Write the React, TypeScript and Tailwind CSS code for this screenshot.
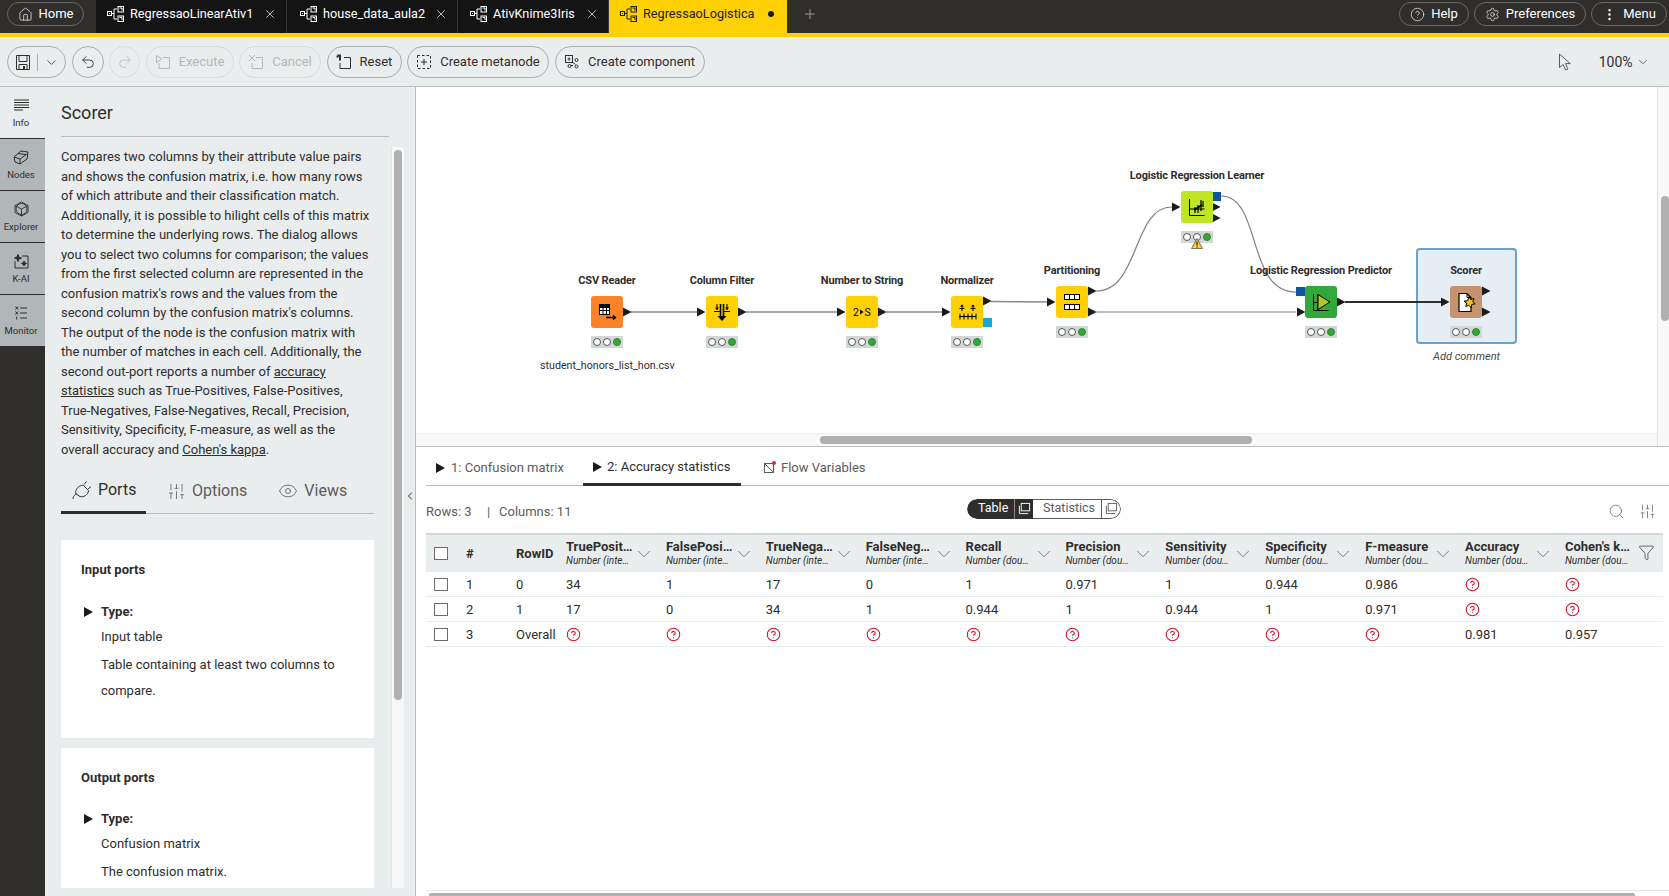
import React from "react";
import {
  House, CircleHelp, Settings, EllipsisVertical, ChevronDown, Undo2, Redo2, Search,
  SlidersVertical, Funnel, Eye, X, Plus, ChevronLeft,
} from "lucide-react";

const DESC = (
  <>
    Compares two columns by their attribute value pairs and shows the confusion matrix, i.e. how many rows of which attribute and their classification match. Additionally, it is possible to hilight cells of this matrix to determine the underlying rows. The dialog allows you to select two columns for comparison; the values from the first selected column are represented in the confusion matrix's rows and the values from the second column by the confusion matrix's columns. The output of the node is the confusion matrix with the number of matches in each cell. Additionally, the second out-port reports a number of <u>accuracy statistics</u> such as True-Positives, False-Positives, True-Negatives, False-Negatives, Recall, Precision, Sensitivity, Specificity, F-measure, as well as the overall accuracy and <u>Cohen's kappa</u>.
  </>
);

function FlowIcon({ className = "" }: { className?: string }) {
  return (
    <svg width="18" height="16" viewBox="0 0 18 16" fill="none" stroke="currentColor" strokeWidth="1" className={className}>
      <rect x="0.5" y="5.5" width="4" height="4" />
      <path d="M2 7.5h1M4.5 7.5H7M7 3v10M7 3h3M7 13h3" />
      <rect x="11" y="0.5" width="5.5" height="5.5" />
      <rect x="11" y="10" width="5.5" height="5.5" />
      <path d="M12.5 2h2.5v2.5M12.5 11.5h2.5V14" />
    </svg>
  );
}

function Tab({ name, w, active, saved }: { name: string; w: string; active?: boolean; saved?: boolean }) {
  return (
    <div className={`flex h-full items-center pb-[5px] ${w} ${active ? "bg-[#ffd104] text-[#1c1a1a]" : "border-r border-[#3a3838] bg-[#151414] text-white"}`}>
      <FlowIcon className="mr-[5px] shrink-0" />
      <span className="whitespace-nowrap text-[12.7px] font-normal">{name}</span>
      {saved ? <X size={14} strokeWidth={1.2} className="ml-auto mr-[9px]" /> : null}
      {active ? <span className="ml-auto mr-[13px] h-[6px] w-[6px] rounded-full bg-[#1c1a1a]" /> : null}
    </div>
  );
}

function TopPill({ w, icon, text }: { w: string; icon: React.ReactNode; text: string }) {
  return (
    <div className={`flex h-[24px] items-center justify-center gap-[6px] rounded-full border border-[#6a6767] text-[13px] text-white ${w}`}>
      {icon}
      <span>{text}</span>
    </div>
  );
}

function ToolBtn({ w, icon, text, off }: { w: string; icon: React.ReactNode; text?: string; off?: boolean }) {
  return (
    <div className={`flex h-[32px] shrink-0 items-center justify-center gap-[8px] rounded-full border text-[13px] ${w} ${off ? "border-[#d8dcdd] text-[#b4b8ba]" : "border-[#a9adaf] text-[#302d2d]"}`}>
      {icon}
      {text ? <span>{text}</span> : null}
    </div>
  );
}

const FrameArrow = ({ kind }: { kind: "exec" | "cancel" | "reset" }) => (
  <svg width="16" height="16" viewBox="0 0 16 16" fill="none" stroke="currentColor" strokeWidth="1">
    <path d="M8 3.5h6.5v11H4V9" />
    {kind === "exec" ? <path d="M1.5 1.5L7 5 1.5 8.5z" /> : null}
    {kind === "cancel" ? <path d="M1 1l6 6M7 1L1 7" /> : null}
    {kind === "reset" ? <path d="M1.5 1.5h2.5v5M1.5 1.5v2" strokeWidth="2" /> : null}
  </svg>
);

function RailItem({ label, active, icon }: { label: string; active?: boolean; icon: React.ReactNode }) {
  return (
    <div className={`flex h-[52px] flex-col items-center border-b border-[#302d2d] pr-[3px] pt-[10px] ${active ? "bg-[#e9edee]" : "bg-[#b1b6b9]"}`}>
      <div className="flex h-[16px] items-center justify-center text-[#302d2d]">{icon}</div>
      <span className="mt-[4px] text-[9.5px] leading-[12px] text-[#302d2d]">{label}</span>
    </div>
  );
}

const Tri = () => <span className="mr-[8px] h-0 w-0 border-y-[5px] border-l-[9px] border-y-transparent border-l-[#1c1a1a]" />;

function PortCard({ title, type, lines, cls, typeGap, descGap }: { title: string; type: string; lines: string; cls: string; typeGap: string; descGap: string }) {
  return (
    <div className={`shrink-0 bg-white pl-[20px] pr-[20px] text-[13px] text-[#302d2d] ${cls}`}>
      <div className="text-[13px] font-bold leading-[20px]">{title}</div>
      <div className={`flex items-center pl-[3px] leading-[20px] ${typeGap}`}>
        <Tri />
        <b>Type:</b>
      </div>
      <div className={`pl-[20px] leading-[20px] ${descGap}`}>{type}</div>
      <div className="mt-[5px] pl-[20px] leading-[26px]">{lines}</div>
    </div>
  );
}

/* ---------- node icons (32x32 space) ---------- */
const IconCsv = (
  <>
    <rect x="8.5" y="8.5" width="10" height="10" fill="#fff" stroke="#000" strokeWidth="1" />
    <path d="M8.5 11.5h10M8.5 14.5h10M12 11.5v7M15.5 11.5v7" stroke="#000" strokeWidth="1" />
    <rect x="8.5" y="8.5" width="10" height="3" fill="#000" />
    <path d="M15 21.5h8" stroke="#000" strokeWidth="1.6" />
    <path d="M22 18.5l3.5 3-3.5 3z" fill="#000" />
  </>
);
const IconFilter = (
  <>
    <path d="M14.5 8v13M17.5 8v13" stroke="#000" strokeWidth="1.6" />
    <path d="M11.5 20l4.5 5 4.5-5z" fill="#000" />
    <path d="M11 8v6M8 15.5h6M21 8v6M18 15.5h6" stroke="#000" strokeWidth="1" />
    <path d="M9 11.5l2 2.5 2-2.5zM19 11.5l2 2.5 2-2.5z" fill="#000" />
  </>
);
const IconNorm = (
  <>
    <path d="M8 20.5h17M9 17.5v6M13 17.5v6M17 17.5v6M21 17.5v6M25 17.5v6" stroke="#000" strokeWidth="1" />
    <path d="M11 9v6M22 9v6M8.5 12.5h5M19.5 12.5h5" stroke="#000" strokeWidth="1" />
    <path d="M9 10.5l2-2 2 2zM20 10.5l2-2 2 2z" fill="#000" />
  </>
);
const IconPart = (
  <>
    <rect x="8.5" y="8.5" width="15" height="5" fill="#fff" stroke="#000" strokeWidth="1" />
    <path d="M13.5 8.5v5M18.5 8.5v5" stroke="#000" strokeWidth="1" />
    <rect x="8.5" y="18.5" width="15" height="5" fill="#fff" stroke="#000" strokeWidth="1" />
    <path d="M13.5 18.5v5M18.5 18.5v5" stroke="#000" strokeWidth="1" />
  </>
);
const IconLearner = (
  <>
    <path d="M8.5 8v16.5h15M8.5 18h15" stroke="#000" strokeWidth="1" fill="none" />
    <path d="M14 22v-6M17 22v-8M20 20V9M22 16v-6" stroke="#000" strokeWidth="1.2" />
    <path d="M13 19l8-5" stroke="#000" strokeWidth="2" />
  </>
);
const IconPred = (
  <>
    <path d="M8.5 8v16.5h15M8.5 16.5h5M13 8v16.5" stroke="#000" strokeWidth="1" fill="none" />
    <path d="M13 8.5L25 16 13 23.5z" fill="#b5c626" stroke="#000" strokeWidth="1" />
  </>
);
const IconScorer = (
  <>
    <path d="M9 7.5h8l4 4v14H9z" fill="#fff" stroke="#000" strokeWidth="1.2" />
    <path d="M17 7.5v4h4" fill="none" stroke="#000" strokeWidth="1" />
    <path d="M19 10.5l1.6 3 3.4-1-1.2 3.2 2.4 2.2-3.4.4-.6 3.4-2.4-2.4-3 1.2 1-3.2-2.6-2.2 3.4-.4z" fill="#f6c416" stroke="#000" strokeWidth="1" />
  </>
);
const IconNts = (
  <>
    <text x="7" y="20" fontSize="10.5" fontFamily="Roboto, sans-serif" fill="#000">2</text>
    <path d="M14 13.5l3.5 2.5-3.5 2.5z" fill="#000" />
    <text x="18.5" y="20" fontSize="10.5" fontFamily="Roboto, sans-serif" fill="#000">S</text>
  </>
);

const OX = 416;
const OY = 87;

function WfNode({ x, y, label, color, icon, warn }: { x: number; y: number; label: string; color: string; icon: React.ReactNode; warn?: boolean }) {
  return (
    <div className="absolute w-[32px]" style={{ left: x - OX, top: y - OY }}>
      <div className="absolute left-1/2 top-[-22px] -translate-x-1/2 whitespace-nowrap text-[11px] font-bold leading-[14px] tracking-[-0.15px] text-[#302d2d]">{label}</div>
      <div className="h-[32px] w-[32px] rounded-[3px]" style={{ background: color }}>
        <svg width="32" height="32" viewBox="0 0 32 32">{icon}</svg>
      </div>
      <div className="mt-[8px] flex h-[12px] w-[32px] items-center justify-center gap-[2px] bg-[#d3d7d8]">
        <span className="h-[8px] w-[8px] rounded-full border border-[#555] bg-white" />
        <span className="h-[8px] w-[8px] rounded-full border border-[#555] bg-white" />
        <span className="h-[8px] w-[8px] rounded-full border border-[#2a8a30] bg-[#34a63a]" />
      </div>
      {warn ? (
        <svg width="12" height="11" viewBox="0 0 12 11" className="absolute left-[10px] top-[47px]">
          <path d="M6 .5L11.5 10.5H.5z" fill="#ffcb2e" stroke="#555" strokeWidth="0.8" />
          <path d="M6 3.5v4M6 8.5v1" stroke="#000" strokeWidth="1" />
        </svg>
      ) : null}
    </div>
  );
}

const Port = ({ x, y }: { x: number; y: number }) => <path d={`M${x} ${y - 4.5}l8.5 4.5-8.5 4.5z`} fill="#1c1a1a" />;

function Canvas() {
  return (
    <div className="relative h-[360px] shrink-0 overflow-hidden border-b border-[#b8bdc0] bg-white">
      <div className="absolute left-[1000px] top-[161px] h-[96px] w-[101px] rounded-[4px] border-2 border-[#6f9fcb] bg-[#e6eef5]" />
      <svg width="1253" height="359" viewBox="0 0 1253 359" className="absolute left-0 top-0">
        <g transform={`translate(${-OX} ${-OY})`}>
          <g stroke="#a8a8a8" strokeWidth="2" fill="none">
            <path d="M631 312H697M746 312H837M886 312H942" />
          </g>
          <path d="M991 301.5L1047 302" stroke="#8a8a8a" strokeWidth="1.4" fill="none" />
          <g stroke="#808080" strokeWidth="1.2" fill="none">
            <path d="M1096 291C1140 291 1132 207 1172 207" />
            <path d="M1221 196C1262 196 1246 292 1296 292" />
            <path d="M1096 312H1296" />
          </g>
          <path d="M1345 302H1441" stroke="#302d2d" strokeWidth="2" fill="none" />
          <Port x={623} y={312} /><Port x={697} y={312} /><Port x={738} y={312} /><Port x={837} y={312} />
          <Port x={878} y={312} /><Port x={942} y={312} /><Port x={983} y={301} /><Port x={1047} y={302} />
          <Port x={1088} y={291} /><Port x={1088} y={312} /><Port x={1172} y={207} />
          <Port x={1212} y={207} /><Port x={1212} y={218} />
          <Port x={1297} y={312} /><Port x={1337} y={302} /><Port x={1441} y={302} />
          <Port x={1482} y={291} /><Port x={1482} y={312} />
          <rect x="983" y="318" width="9" height="9" fill="#1aa7d4" />
          <rect x="1212" y="192" width="9" height="9" fill="#10569f" />
          <rect x="1296" y="287" width="9" height="9" fill="#10569f" />
        </g>
      </svg>
      <WfNode x={591} y={296} label="CSV Reader" color="#fb8226" icon={IconCsv} />
      <WfNode x={706} y={296} label="Column Filter" color="#ffd104" icon={IconFilter} />
      <WfNode x={846} y={296} label="Number to String" color="#ffd104" icon={IconNts} />
      <WfNode x={951} y={296} label="Normalizer" color="#ffd104" icon={IconNorm} />
      <WfNode x={1056} y={286} label="Partitioning" color="#ffd104" icon={IconPart} />
      <WfNode x={1181} y={191} label="Logistic Regression Learner" color="#bfe524" icon={IconLearner} warn />
      <WfNode x={1305} y={286} label="Logistic Regression Predictor" color="#33a83a" icon={IconPred} />
      <WfNode x={1450} y={286} label="Scorer" color="#c7926e" icon={IconScorer} />
      <div className="absolute left-[124px] top-[272px] w-[134px] whitespace-nowrap text-center text-[10.7px] leading-[14px] text-[#302d2d]">student_honors_list_hon.csv</div>
      <div className="absolute left-[1000px] top-[263px] w-[101px] text-center text-[11px] italic leading-[14px] text-[#4a4747]">Add comment</div>
      {/* canvas scrollbars */}
      <div className="absolute right-0 top-0 h-full w-[12px] border-l border-[#e2e4e5] bg-[#f8f8f8]">
        <div className="absolute left-[3px] top-[109px] h-[125px] w-[8px] rounded-full bg-[#b0b0b0]" />
      </div>
      <div className="absolute bottom-0 left-0 h-[13px] w-[1241px] border-t border-[#eeeeee] bg-[#f8f8f8]">
        <div className="absolute left-[404px] top-[2px] h-[8px] w-[432px] rounded-full bg-[#b0b0b0]" />
      </div>
    </div>
  );
}

const Q = () => <CircleHelp size={15} strokeWidth={1.7} className="text-[#d2122e]" />;
type V = string | null;
const HEAD: [string, string][] = [
  ["TruePosit…", "Number (inte…"], ["FalsePosi…", "Number (inte…"], ["TrueNega…", "Number (inte…"], ["FalseNeg…", "Number (inte…"],
  ["Recall", "Number (dou…"], ["Precision", "Number (dou…"], ["Sensitivity", "Number (dou…"], ["Specificity", "Number (dou…"],
  ["F-measure", "Number (dou…"], ["Accuracy", "Number (dou…"], ["Cohen's k…", "Number (dou…"],
];
const ROWS: { n: string; id: string; v: V[] }[] = [
  { n: "1", id: "0", v: ["34", "1", "17", "0", "1", "0.971", "1", "0.944", "0.986", null, null] },
  { n: "2", id: "1", v: ["17", "0", "34", "1", "0.944", "1", "0.944", "1", "0.971", null, null] },
  { n: "3", id: "Overall", v: [null, null, null, null, null, null, null, null, null, "0.981", "0.957"] },
];
const Check = () => <span className="block h-[13px] w-[14px] border border-[#6d6b6b] bg-white" />;

function Table() {
  return (
    <div className="ml-[10px] w-[1237px] text-[13px] text-[#302d2d]">
      <div className="flex h-[39px] items-center border-t-2 border-[#d3d7d8] bg-[#e9edee]">
        <div className="w-[40px] shrink-0 pl-[8px]"><Check /></div>
        <div className="w-[50px] shrink-0 font-bold">#</div>
        <div className="w-[50px] shrink-0 font-bold">RowID</div>
        {HEAD.map(([a, b], i) => (
          <div key={a} className="relative flex h-full w-[99.9px] shrink-0 flex-col justify-center pb-[2px]">
            <div className="whitespace-nowrap text-[13px] font-bold leading-[15px]">{a}</div>
            <div className="whitespace-nowrap text-[10px] italic leading-[13px]">{b}</div>
            {i < 10 ? <ChevronDown size={22} strokeWidth={0.8} className="absolute left-[67px] top-[8px] text-[#555]" /> : null}
          </div>
        ))}
      </div>
      {ROWS.map((r) => (
        <div key={r.n} className="flex h-[25px] items-center border-b border-[#e9edee] pt-[1px]">
          <div className="w-[40px] shrink-0 pl-[8px]"><Check /></div>
          <div className="w-[50px] shrink-0">{r.n}</div>
          <div className="w-[50px] shrink-0">{r.id}</div>
          {r.v.map((c, i) => (
            <div key={i} className="w-[99.9px] shrink-0">{c === null ? <Q /> : c}</div>
          ))}
        </div>
      ))}
    </div>
  );
}

const CopyIc = () => (
  <svg width="13" height="13" viewBox="0 0 14 14" fill="none" stroke="currentColor" strokeWidth="1">
    <rect x="3.5" y="1.5" width="9" height="8" />
    <path d="M1.5 4v8.5H11" />
  </svg>
);

function Bottom() {
  return (
    <div className="relative flex min-h-0 flex-1 flex-col">
      <div className="ml-[10px] flex h-[39px] shrink-0 border-b border-[#b8bdc0] pt-[1px] text-[13px]">
        <div className="flex w-[157px] items-center pl-[10px] pt-[2px] text-[#5d5b5b]">
          <span className="mr-[6px] h-0 w-0 border-y-[5px] border-l-[9px] border-y-transparent border-l-[#1c1a1a]" />
          1: Confusion matrix
        </div>
        <div className="-mb-px flex w-[158px] items-center border-b-[3px] border-[#302d2d] pl-[10px] pt-[2px] text-[#302d2d]">
          <span className="mr-[5px] h-0 w-0 border-y-[5px] border-l-[9px] border-y-transparent border-l-[#1c1a1a]" />
          2: Accuracy statistics
        </div>
        <div className="flex items-center pl-[23px] pt-[2px] text-[#5d5b5b]">
          <span className="relative mr-[7px] block h-[10px] w-[10px] border border-[#5d5b5b]">
            <svg width="8" height="8" viewBox="0 0 8 8" className="absolute left-0 top-0"><path d="M0 0l8 8" stroke="#5d5b5b" strokeWidth="1" /></svg>
            <span className="absolute -right-[3px] -top-[3px] h-[4px] w-[4px] rounded-full bg-[#e2263a]" />
          </span>
          Flow Variables
        </div>
      </div>
      <div className="flex h-[47px] shrink-0 items-center pl-[10px] pt-[4px]">
        <div className="flex w-[541px] items-center text-[13px] text-[#5d5b5b]">
          <span className="w-[61px]">Rows: 3</span>
          <span className="w-[12px]">|</span>
          <span>Columns: 11</span>
        </div>
        <div className="-mt-[6px] flex h-[20px] w-[154px] overflow-hidden rounded-full text-[12.5px]">
          <div className="flex w-[66px] items-center rounded-l-full bg-[#302d2d] pl-[11px] text-white">
            <span className="w-[36px]">Table</span>
            <span className="flex h-full flex-1 items-center border-l border-[#8a8888] pl-[3px]"><CopyIc /></span>
          </div>
          <div className="flex flex-1 items-center rounded-r-full border border-l-0 border-[#5d5b5b] pl-[10px] text-[#5d5b5b]">
            <span className="w-[58px]">Statistics</span>
            <span className="flex h-full flex-1 items-center border-l border-[#5d5b5b] pl-[3px]"><CopyIc /></span>
          </div>
        </div>
        <div className="ml-auto flex items-center gap-[14px] pr-[13px] text-[#5d5b5b]">
          <Search size={17} strokeWidth={1} />
          <SlidersVertical size={17} strokeWidth={1} />
        </div>
      </div>
      <div className="relative">
        <Table />
        <Funnel size={17} strokeWidth={1} className="absolute left-[1222px] top-[11px] text-[#302d2d]" />
      </div>
      <div className="mt-auto ml-[10px] h-[6px] shrink-0 border-t border-[#e6e8e9] pt-[2px]">
        <div className="ml-[3px] h-[4px] w-[1206px] rounded-t-[2px] bg-[#b0b0b0]" />
      </div>
    </div>
  );
}

export default function App() {
  return (
    <div className="flex h-[896px] w-[1669px] flex-col overflow-hidden bg-white font-['Roboto',sans-serif] text-[#302d2d]">
      {/* top bar */}
      <div className="flex h-[37px] shrink-0 items-stretch border-b-[4px] border-[#ffd104] bg-[#302d2d]">
        <div className="flex w-[96px] shrink-0 items-start pl-[7px] pt-[2px]">
          <TopPill w="w-[77px]" icon={<House size={15} strokeWidth={1.1} />} text="Home" />
        </div>
        <Tab name="RegressaoLinearAtiv1" w="w-[191px] pl-[11px]" saved />
        <Tab name="house_data_aula2" w="w-[171px] pl-[13px]" saved />
        <Tab name="AtivKnime3Iris" w="w-[151px] pl-[12px]" saved />
        <Tab name="RegressaoLogistica" w="w-[178px] pl-[11px]" active />
        <div className="flex w-[46px] items-center justify-center pb-[5px] text-[#b9b7b7]"><Plus size={16} strokeWidth={1.1} /></div>
        <div className="ml-auto flex items-start gap-[5px] pr-[2px] pt-[2px]">
          <TopPill w="w-[70px]" icon={<CircleHelp size={15} strokeWidth={1.1} />} text="Help" />
          <TopPill w="w-[112px]" icon={<Settings size={15} strokeWidth={1.1} />} text="Preferences" />
          <TopPill w="w-[76px]" icon={<EllipsisVertical size={15} strokeWidth={2} />} text="Menu" />
        </div>
      </div>

      {/* toolbar */}
      <div className="flex h-[50px] shrink-0 items-center gap-[5.5px] border-b border-[#b8bdc0] bg-[#e9edee] pl-[7px] pt-[1px]">
        <div className="flex h-[32px] w-[59px] shrink-0 items-center rounded-full border border-[#a9adaf]">
          <span className="flex w-[30px] justify-center border-r border-[#a9adaf]">
            <svg width="16" height="17" viewBox="0 0 16 17" fill="none" stroke="#302d2d" strokeWidth="1">
              <path d="M1.5 1.5h13v14h-13zM4 1.5v6h8v-6M4 15.5v-5h8v5" />
              <path d="M9 12v3" strokeWidth="2" />
            </svg>
          </span>
          <ChevronDown size={15} strokeWidth={1.2} className="ml-[6px]" />
        </div>
        <ToolBtn w="w-[32px]" icon={<Undo2 size={16} strokeWidth={1.3} />} />
        <ToolBtn w="w-[31px]" off icon={<Redo2 size={16} strokeWidth={1.2} />} />
        <ToolBtn w="w-[88px]" off icon={<FrameArrow kind="exec" />} text="Execute" />
        <ToolBtn w="w-[82px]" off icon={<FrameArrow kind="cancel" />} text="Cancel" />
        <ToolBtn w="w-[75px]" icon={<FrameArrow kind="reset" />} text="Reset" />
        <ToolBtn w="w-[142px]" text="Create metanode" icon={
          <svg width="16" height="16" viewBox="0 0 16 16" fill="none" stroke="currentColor" strokeWidth="1">
            <rect x="1.5" y="1.5" width="13" height="13" strokeDasharray="2.5 2" />
            <path d="M8 5v6M5 8h6" />
          </svg>
        } />
        <ToolBtn w="w-[150px]" text="Create component" icon={
          <svg width="16" height="16" viewBox="0 0 16 16" fill="none" stroke="currentColor" strokeWidth="1">
            <rect x="1.5" y="1.5" width="7" height="7" />
            <path d="M5 3.5v3M3.5 5h3M9 8.5l2.5 2M7 11.5h2" />
            <circle cx="12.5" cy="6" r="1.5" />
            <circle cx="12.5" cy="12.5" r="1.5" />
            <circle cx="5.5" cy="12" r="1.5" />
          </svg>
        } />
        <svg width="16" height="19" viewBox="0 0 16 19" fill="none" stroke="#5d5b5b" strokeWidth="1" className="ml-auto mr-[19px]">
          <path d="M1.5 1v13.5l3.6-3 2.4 5.5 2.4-1-2.4-5.4h4.8z" />
        </svg>
        <span className="text-[14px]">100%</span>
        <ChevronDown size={14} strokeWidth={1.2} className="ml-[-2px] mr-[19px]" />
      </div>

      {/* main */}
      <div className="flex min-h-0 flex-1">
        <div className="flex w-[45px] shrink-0 flex-col bg-[#302d2d]">
          <RailItem label="Info" active icon={
            <svg width="15" height="13" viewBox="0 0 15 13" stroke="currentColor" strokeWidth="1"><path d="M0 1h15M0 3.5h15M0 6h15M0 8.5h15M0 11h9" /></svg>
          } />
          <RailItem label="Nodes" icon={
            <svg width="16" height="15" viewBox="0 0 16 15" fill="none" stroke="currentColor" strokeWidth="1"><path d="M1 7l7-6 7 1-1 7-7 5-5-2zM5 3.5l8 1M1 7l6 2 7-5M7 9l0 5" /></svg>
          } />
          <RailItem label="Explorer" icon={
            <svg width="15" height="16" viewBox="0 0 15 16" fill="none" stroke="currentColor" strokeWidth="0.9"><path d="M7.5 1L14 4.5v7L7.5 15 1 11.5v-7zM1 4.5L7.5 8 14 4.5M7.5 8v7" /><circle cx="7.5" cy="8" r="5.5" /></svg>
          } />
          <RailItem label="K-AI" icon={
            <svg width="15" height="15" viewBox="0 0 15 15" fill="none" stroke="currentColor" strokeWidth="1"><path d="M8 2h6v12H1V7" /><path d="M4 0.5l1 2.5 2.5 1-2.5 1-1 2.5-1-2.5-2.5-1 2.5-1zM10 7l.8 1.7 1.7.8-1.7.8-.8 1.7-.8-1.7-1.7-.8 1.7-.8z" fill="currentColor" /></svg>
          } />
          <RailItem label="Monitor" icon={
            <svg width="12" height="14" viewBox="0 0 12 14" fill="none" stroke="currentColor" strokeWidth="1"><path d="M5 2h7M5 7h7M5 12h7M0.5 .5l2.5 3M3 .5l-2.5 3M0.5 5.5l2.5 3M3 5.5l-2.5 3M1.7 10.5v3" /></svg>
          } />
        </div>

        {/* description panel */}
        <div className="relative flex w-[371px] shrink-0 flex-col overflow-hidden border-r border-[#b8bdc0] bg-[#e9edee]">
          <div className="ml-[16px] mr-[26px] shrink-0 border-b border-[#b8bdc0] pb-[11px] pt-[14px] text-[18px] leading-[24px]">Scorer</div>
          <div className="mt-[10px] flex h-[741px] shrink-0">
            <div className="flex w-[346px] shrink-0 flex-col overflow-hidden pl-[16px] pr-[17px]">
              <div className="shrink-0 text-[13px] leading-[19.5px] text-[#302d2d]">{DESC}</div>
              <div className="mt-[10px] flex h-[45px] shrink-0 items-stretch border-b border-[#b8bdc0] text-[16px] text-[#5d5b5b]">
                <div className="-mb-px flex w-[85px] items-center border-b-[3px] border-[#302d2d] pl-[11px] text-[#302d2d]">
                  <svg width="20" height="20" viewBox="0 0 20 20" fill="none" stroke="currentColor" strokeWidth="1" className="mr-[6px]">
                    <path d="M1 19c0-2 .6-2.5 1.5-3.5S4 13.5 4 13.5" />
                    <path d="M4 14c-1-3 1-6 3-7.5 2-1.2 3.5-1.2 4.5-1l5 5c0 2-1 3.5-3 5-2 1.3-4 1.5-5.5 1z" />
                    <path d="M12 4.5L14.500 1.500M16 9l3-2.500" />
                  </svg>
                  Ports
                </div>
                <div className="flex items-center pl-[21px]">
                  <SlidersVertical size={19} strokeWidth={1} className="mr-[6px]" />Options
                </div>
                <div className="flex items-center pl-[31px]">
                  <Eye size={20} strokeWidth={1} className="mr-[6px]" />Views
                </div>
              </div>
              <div className="mt-[26px] flex flex-col gap-[10px]">
                <PortCard title="Input ports" type="Input table" lines="Table containing at least two columns to compare." cls="h-[198px] pt-[20px]" typeGap="mt-[22px]" descGap="mt-[5px]" />
                <PortCard title="Output ports" type="Confusion matrix" lines="The confusion matrix." cls="h-[140px] pt-[20px]" typeGap="mt-[21px]" descGap="mt-[5px]" />
              </div>
            </div>
            <div className="w-[13px] shrink-0 border-l border-[#e2e4e5] bg-[#f8f8f8] pl-[2px] pt-[3px]">
              <div className="h-[550px] w-[8px] rounded-full bg-[#b0b0b0]" />
            </div>
          </div>
          <ChevronLeft size={12} strokeWidth={2} className="absolute left-[359px] top-[403px] text-[#302d2d]" />
        </div>

        {/* right */}
        <div className="flex min-w-0 flex-1 flex-col">
          <Canvas />
          <Bottom />
        </div>
      </div>
    </div>
  );
}
